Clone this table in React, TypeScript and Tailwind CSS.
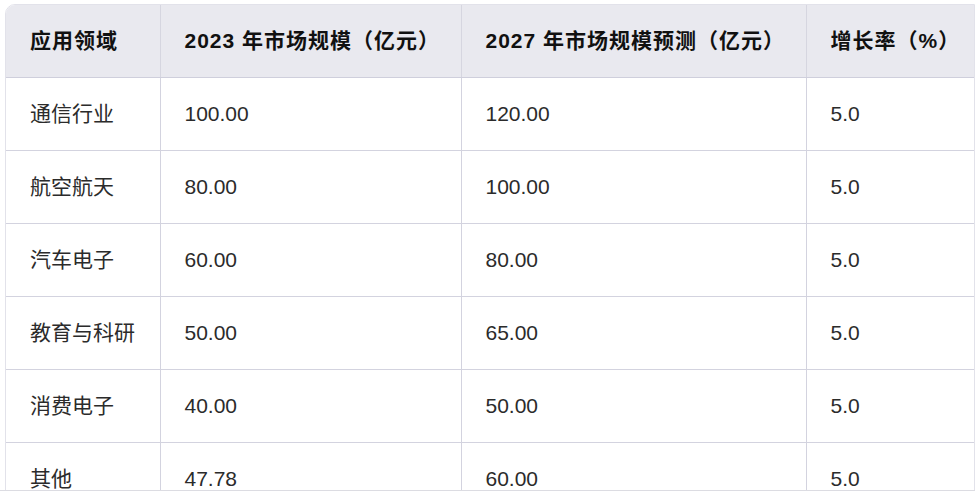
import React from 'react';

const rows = [
  ['通信行业', '100.00', '120.00', '5.0'],
  ['航空航天', '80.00', '100.00', '5.0'],
  ['汽车电子', '60.00', '80.00', '5.0'],
  ['教育与科研', '50.00', '65.00', '5.0'],
  ['消费电子', '40.00', '50.00', '5.0'],
  ['其他', '47.78', '60.00', '5.0'],
];

const headers = ['应用领域', '2023 年市场规模（亿元）', '2027 年市场规模预测（亿元）', '增长率（%）'];
const widths = ['w-[154px]', 'w-[301px]', 'w-[345px]', 'w-[168px]'];

const App: React.FC = () => {
  return (
    <div
      lang="zh-CN"
      className="w-[975px] h-[491px] bg-white overflow-hidden border-b border-[#dcdce2] font-['Liberation_Sans','Noto_Sans_CJK_SC',sans-serif]"
    >
      <div className="pt-1 pl-[5px]">
        <div className="w-[970px] rounded-tl-[10px] border border-[#e2e2ea] overflow-hidden">
          <table className="w-full border-collapse table-fixed">
            <colgroup>
              {widths.map((w, i) => (
                <col key={i} className={w} />
              ))}
            </colgroup>
            <thead>
              <tr className="bg-[#e9e9ef] h-[72px]">
                {headers.map((h, i) => (
                  <th
                    key={i}
                    className={`text-left align-middle px-6 whitespace-nowrap text-[21px] tracking-[1px] font-bold text-[#111] border-b border-[#cfcfdc] ${i > 0 ? 'border-l border-l-[#d6d6e0]' : ''}`}
                  >
                    {h}
                  </th>
                ))}
              </tr>
            </thead>
            <tbody>
              {rows.map((r, ri) => (
                <tr key={ri} className="h-[73px]">
                  {r.map((c, ci) => (
                    <td
                      key={ci}
                      className={`align-middle px-6 whitespace-nowrap text-[21px] text-[#2b2b2b] border-b border-[#d3d3df] ${ci > 0 ? 'border-l border-l-[#d3d3df]' : ''}`}
                    >
                      {c}
                    </td>
                  ))}
                </tr>
              ))}
            </tbody>
          </table>
        </div>
      </div>
    </div>
  );
};

export default App;
